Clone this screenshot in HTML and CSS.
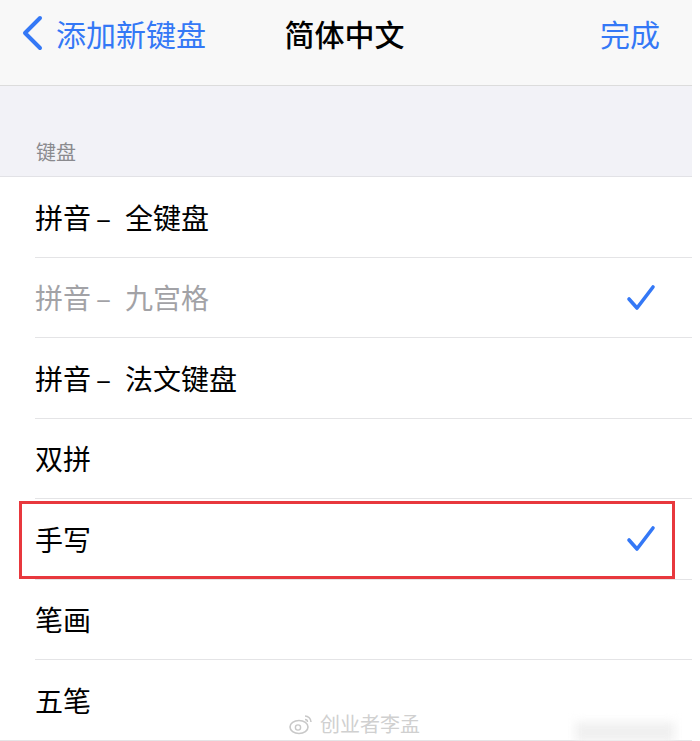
FILE: index.html
```html
<!DOCTYPE html>
<html lang="zh-CN">
<head>
    <meta charset="UTF-8">
    <meta name="viewport" content="width=device-width, initial-scale=1.0">
    <title>简体中文</title>
    <link rel="stylesheet" href="styles.css">
</head>
<body>
    <div class="screen">
        <div class="navbar">
            <div class="nav-back">
                <svg class="chevron" width="24" height="36" viewBox="0 0 24 36">
                    <path d="M19 3 L4 18 L19 33" fill="none" stroke="#3478f6" stroke-width="4" stroke-linecap="round" stroke-linejoin="round"/>
                </svg>
                <span>添加新键盘</span>
            </div>
            <div class="nav-title">简体中文</div>
            <div class="nav-done">完成</div>
        </div>

        <div class="group-header">键盘</div>

        <div class="list">
            <div class="row"><div class="row-inner"><span>拼音<span class="dash">–</span>全键盘</span></div></div>
            <div class="row dim">
                <div class="row-inner">
                    <span>拼音<span class="dash">–</span>九宫格</span>
                    <svg class="check" width="30" height="27" viewBox="0 0 30 27"><path d="M3 15 L11 24 L27 3" fill="none" stroke="#3478f6" stroke-width="3.6" stroke-linecap="round" stroke-linejoin="round"/></svg>
                </div>
            </div>
            <div class="row"><div class="row-inner"><span>拼音<span class="dash">–</span>法文键盘</span></div></div>
            <div class="row"><div class="row-inner">双拼</div></div>
            <div class="row marked">
                <div class="row-inner">
                    <span>手写</span>
                    <svg class="check" width="30" height="27" viewBox="0 0 30 27"><path d="M3 15 L11 24 L27 3" fill="none" stroke="#3478f6" stroke-width="3.6" stroke-linecap="round" stroke-linejoin="round"/></svg>
                </div>
            </div>
            <div class="row"><div class="row-inner">笔画</div></div>
            <div class="row last"><div class="row-inner">五笔</div></div>
        </div>

        <div class="watermark">
            <svg width="26" height="22" viewBox="0 0 26 22">
                <ellipse cx="11" cy="14" rx="9" ry="6.5" fill="none" stroke="#c8c8c8" stroke-width="1.6"/>
                <circle cx="10" cy="14.5" r="2.6" fill="none" stroke="#c8c8c8" stroke-width="1.4"/>
                <path d="M17 3 A6 6 0 0 1 23 9" fill="none" stroke="#c8c8c8" stroke-width="1.6"/>
                <path d="M17 6.5 A2.5 2.5 0 0 1 19.5 9" fill="none" stroke="#c8c8c8" stroke-width="1.4"/>
            </svg>
            <span>创业者李孟</span>
        </div>
        <div class="blur-patch"></div>
    </div>
</body>
</html>
```

FILE: styles.css
```css
body {
    margin: 0;
    background: #ffffff;
    font-family: "Noto Sans CJK SC", "Noto Sans", sans-serif;
}
.screen {
    position: relative;
    width: 692px;
    height: 741px;
    overflow: hidden;
    background: #ffffff;
}
.navbar {
    box-sizing: border-box;
    height: 86px;
    padding: 0 32px 20px 21px;
    display: grid;
    grid-template-columns: 1fr auto 1fr;
    align-items: center;
    background: #f8f8f8;
    border-bottom: 1px solid #dcdcdc;
    font-size: 30px;
}
.nav-back {
    display: flex;
    align-items: center;
    gap: 11px;
    color: #3478f6;
}
.nav-title {
    color: #000000;
    font-weight: 500;
    padding-left: 8px;
}
.nav-done {
    justify-self: end;
    color: #3478f6;
}
.group-header {
    box-sizing: border-box;
    height: 91px;
    padding: 0 0 10px 36px;
    display: flex;
    align-items: flex-end;
    background: #f2f2f7;
    border-bottom: 1px solid #e2e2e6;
    color: #8a8a8e;
    font-size: 20px;
}
.row {
    position: relative;
    padding-left: 35px;
}
.row-inner {
    box-sizing: border-box;
    height: 80.5px;
    padding-right: 36px;
    display: flex;
    align-items: center;
    justify-content: space-between;
    border-bottom: 1px solid #e4e4e6;
    color: #000000;
    font-size: 28px;
}
.dash {
    margin: 0 14px 0 5px;
}
.row.dim .row-inner {
    color: #a2a2a6;
}
.row.last {
    padding-left: 0;
}
.row.last .row-inner {
    padding-left: 35px;
}
.row.marked::after {
    content: "";
    position: absolute;
    left: 19px;
    right: 17px;
    top: 2px;
    bottom: 1px;
    border: 3px solid #e8383d;
}
.watermark {
    position: absolute;
    left: 288px;
    top: 709px;
    display: flex;
    align-items: center;
    gap: 6px;
    color: #d0d0d0;
    font-size: 20px;
}
.blur-patch {
    position: absolute;
    left: 575px;
    top: 722px;
    width: 100px;
    height: 20px;
    background: #f0f0f0;
    filter: blur(5px);
}
```
